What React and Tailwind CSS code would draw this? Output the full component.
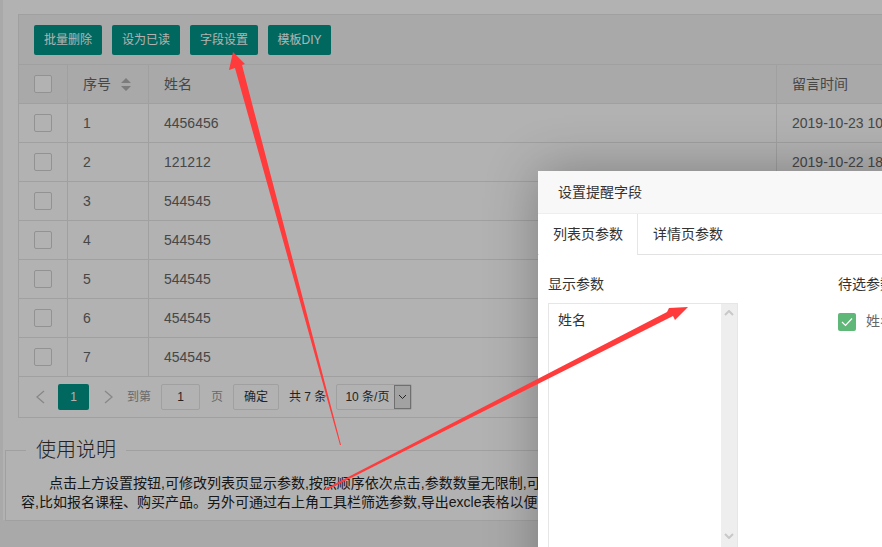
const FONT = "font-['Liberation_Sans','Noto_Sans_CJK_SC',sans-serif]";

const rows = [
  ["1", "4456456", "2019-10-23 10:25:36"],
  ["2", "121212", "2019-10-22 18:12:08"],
  ["3", "544545", "2019-10-22 18:11:40"],
  ["4", "544545", "2019-10-22 18:11:22"],
  ["5", "544545", "2019-10-22 18:10:57"],
  ["6", "454545", "2019-10-22 18:10:31"],
  ["7", "454545", "2019-10-22 18:10:02"],
];

function Check() {
  return <span className="block w-[18px] h-[18px] border border-[#d2d2d2] rounded-[2px] bg-white" />;
}

function Row({ no, name, time, head }) {
  return (
    <div className={`flex h-[39px] border-b border-[#e6e6e6] text-[14px] text-[#666] ${head ? "bg-[#f2f2f2]" : "bg-white"}`}>
      <div className="w-[49px] shrink-0 border-r border-[#e6e6e6] flex items-center pl-[15px]"><Check /></div>
      <div className="w-[81px] shrink-0 border-r border-[#e6e6e6] flex items-center pl-[15px] gap-[10px]">{no}{head && (
        <svg width="10" height="13" viewBox="0 0 10 13" className="block"><path d="M5 0l5 5H0z M5 13L0 8h10z" fill="#b2b2b2" /></svg>
      )}</div>
      <div className="w-[628px] shrink-0 border-r border-[#e6e6e6] flex items-center pl-[15px]">{name}</div>
      <div className="w-[300px] shrink-0 flex items-center pl-[15px] whitespace-nowrap">{time}</div>
    </div>
  );
}

function Pager() {
  return (
    <div className="flex items-center h-[40px] pl-[14px] text-[13px] text-[#666] whitespace-nowrap">
      <svg width="12" height="14" viewBox="0 0 12 14" className="ml-[1px]"><path d="M10 1L3 7l7 6" fill="none" stroke="#c2c2c2" strokeWidth="1.3" /></svg>
      <span className="ml-[12px] w-[31px] h-[26px] bg-[#009688] text-white rounded-[2px] flex items-center justify-center text-[12px]">1</span>
      <svg width="12" height="14" viewBox="0 0 12 14" className="ml-[14px]"><path d="M2 1l7 6-7 6" fill="none" stroke="#c2c2c2" strokeWidth="1.3" /></svg>
      <span className="ml-[12px] text-[12px] text-[#999]">到第</span>
      <span className="ml-[10px] w-[39px] h-[26px] border border-[#e6e6e6] rounded-[2px] flex items-center justify-center text-[12px] text-[#333]">1</span>
      <span className="ml-[11px] text-[12px] text-[#999]">页</span>
      <span className="ml-[10px] w-[46px] h-[26px] border border-[#e6e6e6] rounded-[2px] flex items-center justify-center text-[12px] text-[#333]">确定</span>
      <span className="ml-[10px] text-[12px] text-[#333]">共 7 条</span>
      <span className="ml-[10px] w-[76px] h-[26px] border border-[#e6e6e6] rounded-[2px] flex items-center text-[12px] text-[#333] pl-[8px] relative">
        10 条/页
        <span className="absolute right-0 top-0 bottom-0 w-[17px] bg-[#e8e8e8] border border-[#a0a0a0] flex items-center justify-center">
          <svg width="9" height="6" viewBox="0 0 9 6"><path d="M1 1l3.5 3.5L8 1" fill="none" stroke="#333" strokeWidth="1" /></svg>
        </span>
      </span>
    </div>
  );
}

export default function App() {
  return (
    <div className={`relative w-[882px] h-[547px] overflow-hidden bg-[#f2f2f2] ${FONT}`}>
      {/* page */}
      <div className="ml-[3px] w-[1000px] h-[520px] bg-white pt-[14px]">
        <div className="ml-[15px] border border-[#e6e6e6] w-[1100px]">
          <div className="flex gap-[10px] h-[50px] items-center pl-[15px] bg-[#f2f2f2] border-b border-[#e6e6e6]">
            {["批量删除", "设为已读", "字段设置"].map((t) => (
              <span key={t} className="h-[30px] px-[10px] flex items-center bg-[#009688] text-white text-[12px] rounded-[2px]">{t}</span>
            ))}
            <span className="h-[30px] w-[63px] flex items-center justify-center bg-[#009688] text-white text-[12px] rounded-[2px]">模板DIY</span>
          </div>
          <Row head no="序号" name="姓名" time="留言时间" />
          {rows.map((r) => <Row key={r[0]} no={r[0]} name={r[1]} time={r[2]} />)}
          <Pager />
        </div>
        <fieldset className="ml-[2px] mt-[20px] w-[1100px] border border-[#e6e6e6] h-[83px] pl-[15px]">
          <legend className="ml-[5px] px-[10px] text-[20px] leading-[24px] font-light text-[#333]">使用说明</legend>
          <div className="text-[14px] leading-[19px] text-[#222] whitespace-nowrap pt-[12px]">
            <p className="indent-[28px]">点击上方设置按钮,可修改列表页显示参数,按照顺序依次点击,参数数量无限制,可显示多个字段内</p>
            <p>容,比如报名课程、购买产品。另外可通过右上角工具栏筛选参数,导出excle表格以便查看统计。</p>
          </div>
        </fieldset>
      </div>

      {/* shade */}
      <div className="absolute inset-0 bg-black/30" />

      {/* dialog */}
      <div className="absolute left-[538px] top-[171px] w-[500px] h-[500px] bg-white shadow-[1px_1px_50px_rgba(0,0,0,0.3)]">
        <div className="h-[43px] bg-[#f8f8f8] border-b border-[#eee] flex items-center pl-[20px] text-[14px] text-[#333]">设置提醒字段</div>
        <div className="flex h-[41px] border-b border-[#e2e2e2] text-[14px] text-[#333]">
          <span className="ml-[1px] w-[99px] h-[41px] flex items-center justify-center bg-white border-r border-[#e6e6e6]">列表页参数</span>
          <span className="w-[100px] flex items-center justify-center ml-0">详情页参数</span>
        </div>
        <div className="flex pl-[10px] pt-[19px] text-[14px] text-[#333]">
          <div className="w-[290px]">
            <div className="h-[20px] leading-[20px]">显示参数</div>
            <div className="mt-[9px] w-[190px] h-[300px] border border-[#e6e6e6] flex justify-between">
              <span className="pl-[9px] pt-[6px] leading-[20px]">姓名</span>
              <span className="w-[16px] bg-[#eeeeee] relative">
                <svg width="10" height="6" viewBox="0 0 10 6" className="absolute left-[3px] top-[6px]"><path d="M1 5l4-4 4 4" fill="none" stroke="#c8c8c8" strokeWidth="2" /></svg>
                <svg width="10" height="6" viewBox="0 0 10 6" className="absolute left-[3px] top-[229px]"><path d="M1 1l4 4 4-4" fill="none" stroke="#c8c8c8" strokeWidth="2" /></svg>
              </span>
            </div>
          </div>
          <div>
            <div className="h-[20px] leading-[20px]">待选参数</div>
            <div className="mt-[17px] flex items-center gap-[10px] text-[#666]">
              <span className="w-[18px] h-[18px] bg-[#5fb878] rounded-[2px] flex items-center justify-center">
                <svg width="12" height="10" viewBox="0 0 12 10"><path d="M1 5l3.5 3.5L11 1.5" fill="none" stroke="#fff" strokeWidth="1.2" /></svg>
              </span>
              姓名
            </div>
          </div>
        </div>
      </div>

      {/* annotation arrows */}
      <svg className="absolute inset-0 pointer-events-none" width="882" height="547" viewBox="0 0 882 547">
        <path d="M233 52L245 64L242 65L341 445L340 445L235 68L229 70Z" fill="#ff3b3b" />
        <path d="M688 307L675 320L673 316L327 490L325 489L667 312L669 308Z" fill="#ff3b3b" />
      </svg>
    </div>
  );
}
